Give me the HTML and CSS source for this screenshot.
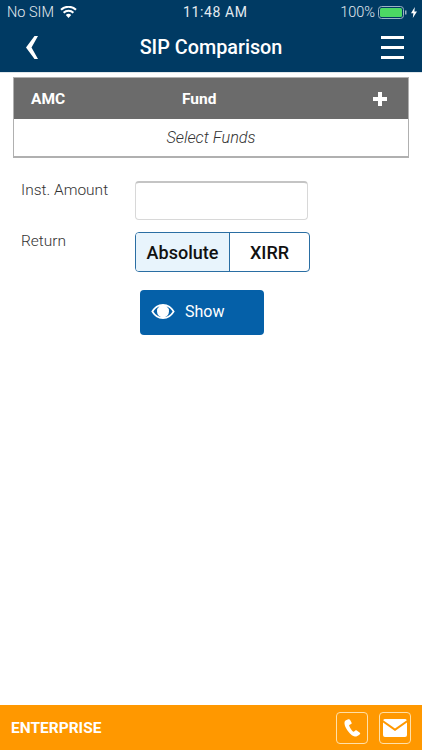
FILE: index.html
```html
<!DOCTYPE html>
<html lang="en">
<head>
<meta charset="utf-8">
<title>SIP Comparison</title>
<link rel="stylesheet" href="styles.css">
</head>
<body>
<div class="app">
  <header class="top">
    <div class="status">
      <div class="status-left">
        <span>No SIM</span>
        <svg class="wifi" width="17" height="12" viewBox="0 0 17 12"><path d="M8.500 12 5.800 9a3.800 3.800 0 0 1 5.400 0z" fill="#fff"/><path d="M3.600 6.700a7 7 0 0 1 9.800 0M1 3.800a10.800 10.800 0 0 1 15 0" fill="none" stroke="#fff" stroke-width="2"/></svg>
      </div>
      <span class="clock">11:48 AM</span>
      <div class="status-right">
        <span>100%</span>
        <svg width="30" height="13" viewBox="0 0 30 13"><rect x="0.500" y="0.500" width="25" height="12" rx="3" fill="none" stroke="#9db3c4"/><rect x="2" y="2" width="22" height="9" rx="1.500" fill="#4cd964"/><rect x="27" y="4.500" width="1.500" height="4" fill="#9db3c4"/></svg>
        <svg width="6" height="11" viewBox="0 0 6 11"><path d="M3.800 0 0 6.200h2.400L1.800 11 6 4.400H3.400z" fill="#fff"/></svg>
      </div>
    </div>
    <div class="nav">
      <svg class="back" width="12" height="23" viewBox="0 0 12 23"><path d="M8.500 0H12L5.500 11.500 12 23H8.500L0 11.500z" fill="#fff"/></svg>
      <h1>SIP Comparison</h1>
      <div class="burger"><i></i><i></i><i></i></div>
    </div>
  </header>
  <main class="content">
    <section class="table">
      <div class="thead">
        <span class="c-amc">AMC</span>
        <span class="c-fund">Fund</span>
        <svg width="14" height="14" viewBox="0 0 14 14"><path d="M5 0h4v5h5v4H9v5H5V9H0V5h5z" fill="#fff"/></svg>
      </div>
      <div class="tbody">Select Funds</div>
    </section>
    <div class="form">
      <div class="row row-amount">
        <label class="lab">Inst. Amount</label>
        <div class="input"></div>
      </div>
      <div class="row row-return">
        <span class="lab">Return</span>
        <div class="seg">
          <span class="seg-on">Absolute</span>
          <span class="seg-off">XIRR</span>
        </div>
      </div>
      <button class="show">
        <svg width="24" height="15" viewBox="0 0 24 15"><path d="M12 0C7 0 2.800 3 0.300 7.500 2.800 12 7 15 12 15s9.200-3 11.700-7.500C21.200 3 17 0 12 0zM2.400 7.500C4 5 6 3.200 8.500 2.200A6 6 0 0 0 6 7.500a6 6 0 0 0 12 0 6 6 0 0 0-2.500-5.300C18 3.200 20 5 21.600 7.500 19.400 11 15.900 13.300 12 13.300S4.600 11 2.400 7.500z" fill="#fff"/><path d="M11 2.800a1.500 1.500 0 0 1-2 2.200 5 5 0 0 0-.7 2.500A3.700 3.700 0 1 0 11 2.800z" fill="#fff"/></svg>
        <span>Show</span>
      </button>
    </div>
  </main>
  <footer class="foot">
    <span class="brand">ENTERPRISE</span>
    <div class="foot-icons">
      <div class="ico">
        <svg width="17" height="18" viewBox="0 0 17 20" preserveAspectRatio="none"><path d="M4.200.3 1.500 1.800C-.3 3 .3 7 2.700 11.500c2.500 4.500 5.700 7.800 8.300 8 1.400.1 4-1.500 5-2.900.4-.6.300-1-.2-1.400l-3-2.400c-.6-.4-1-.4-1.500 0l-1.200 1c-.5.4-1 .3-1.500-.2-1.300-1.400-3-4.200-3.400-6-.2-.6 0-1 .5-1.300l1.400-.7c.5-.3.700-.7.500-1.300L6 .9C5.700.2 5 0 4.200.3z" fill="#fff"/></svg>
      </div>
      <div class="ico">
        <svg width="24" height="18" viewBox="0 0 24 18"><path d="M2 0h20a2 2 0 0 1 1.800 1.200L12 9.500.2 1.200A2 2 0 0 1 2 0z" fill="#fff"/><path d="M0 3.400 12 12l12-8.600V16a2 2 0 0 1-2 2H2a2 2 0 0 1-2-2z" fill="#fff"/></svg>
      </div>
    </div>
  </footer>
</div>
</body>
</html>
```
FILE: styles.css
```css
* { box-sizing: border-box; }
html, body { margin: 0; padding: 0; }
body { font-family: Roboto, "Liberation Sans", sans-serif; background: #fff; }
.app { width: 422px; height: 750px; display: flex; flex-direction: column; overflow: hidden; }
.top { background: #003a63; color: #fff; height: 73px; border-bottom: 1px solid #dfe6ea; }
.status { height: 24px; padding: 0 5px 0 7px; display: flex; align-items: center; justify-content: space-between; font-size: 14.500px; font-weight: 300; color: #e4ebf0; position: relative; }
.status-left, .status-right { display: flex; align-items: center; gap: 6px; }
.status-right { gap: 3px; }
.clock { position: absolute; left: 183px; font-weight: 400; font-size: 14px; letter-spacing: .6px; }
.nav { height: 48px; position: relative; display: flex; align-items: center; justify-content: space-between; padding: 0 18px 2px 26px; }
.nav h1 { position: absolute; left: 0; right: 0; margin: 0; text-align: center; font-size: 19.800px; font-weight: 500; }
.burger { width: 23px; display: flex; flex-direction: column; gap: 7px; }
.burger i { display: block; height: 3px; background: #fff; }
.content { flex: 1; }
.table { margin: 4px 13px 0; border: 1px solid #b0b0b0; border-bottom-width: 2px; }
.thead { height: 41px; background: #6b6b6b; color: #fff; display: flex; align-items: center; font-size: 15.500px; font-weight: 700; padding: 0 21px 0 17px; }
.c-amc { width: 151px; }
.c-fund { flex: 1; }
.tbody { height: 37px; display: flex; align-items: center; justify-content: center; font-size: 16.300px; font-weight: 300; font-style: italic; color: #333; }
.form { padding-left: 21px; }
.row { display: flex; }
.lab { width: 114px; font-size: 15.500px; font-weight: 300; color: #333; padding-top: 0; }
.row-amount { margin-top: 23px; }
.row-return { margin-top: 12px; }
.input { width: 173px; height: 39px; border: 1px solid #d8d8d8; border-top: 2px solid #c4c4c4; border-radius: 4px; }
.seg { width: 175px; height: 40px; display: flex; border: 1px solid #2a6ea3; border-radius: 4px; font-size: 18px; color: #111; font-weight: 500; }
.seg span { display: flex; align-items: center; justify-content: center; }
.seg-on { width: 94px; background: #e8f4fc; border-right: 1px solid #2a6ea3; border-radius: 3px 0 0 3px; }
.seg-off { flex: 1; }
.show { margin: 18px 0 0 119px; width: 124px; height: 45px; background: #0560a8; border: 0; border-radius: 4px; color: #fff; font: 400 16px Roboto, "Liberation Sans", sans-serif; display: flex; align-items: center; gap: 10px; padding: 0 0 2px 11px; }
.foot { height: 45px; background: #ff9800; display: flex; align-items: center; justify-content: space-between; padding: 0 11px; }
.brand { color: #fff; font-size: 15.500px; font-weight: 700; }
.foot-icons { display: flex; gap: 11px; }
.ico { width: 32px; height: 32px; border: 1px solid #ffe0a8; border-radius: 4px; display: flex; align-items: center; justify-content: center; }
```
